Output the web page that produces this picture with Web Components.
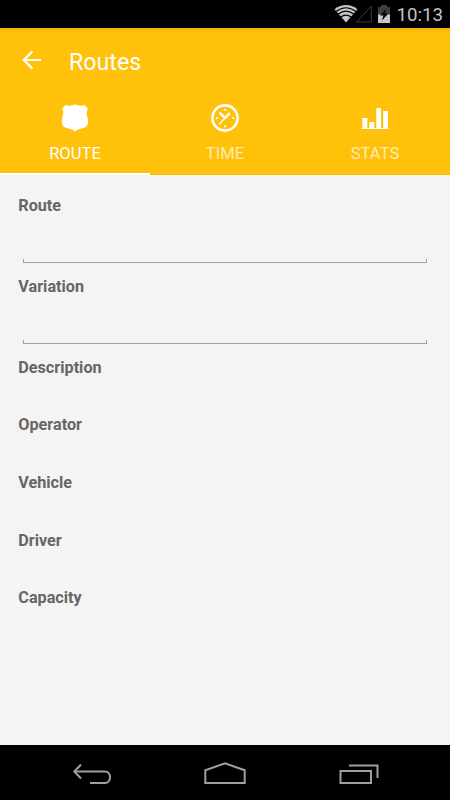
<!DOCTYPE html>
<html lang="en">
<head>
<meta charset="utf-8">
<title>Routes</title>
<style>
  html, body { margin: 0; height: 100%; }
  body { font-family: Roboto, "Noto Sans", sans-serif; background: #f4f4f4; overflow: hidden; }
</style>
</head>
<body>
<route-app>
  <status-bar slot="top">10:13</status-bar>
  <app-bar slot="top">Routes</app-bar>
  <tab-bar slot="top">
    <tab-item icon="route" selected>ROUTE</tab-item>
    <tab-item icon="time">TIME</tab-item>
    <tab-item icon="stats">STATS</tab-item>
  </tab-bar>
  <form-row editable>Route</form-row>
  <form-row editable>Variation</form-row>
  <form-row>Description</form-row>
  <form-row>Operator</form-row>
  <form-row>Vehicle</form-row>
  <form-row>Driver</form-row>
  <form-row>Capacity</form-row>
  <nav-bar slot="bottom"></nav-bar>
</route-app>

<script>
const icons = {
  route: `<path fill="#fff" d="M4.500.9C7.500 2.200 11 1.800 14 .3c3 1.500 6.500 1.900 9.500.6l3.300 3.600c-1.500 3-1.300 5.700-.4 8.500 1.400 4.400 1 8.800-2.600 10.600-3 1.400-7.700 1.200-9.800 4.100-2.100-2.900-6.800-2.700-9.800-4.100C.6 21.800.2 17.400 1.600 13c.9-2.800 1.100-5.500-.4-8.500z"/>`,
  time: `<g fill="none" stroke="#fff"><circle cx="14" cy="14" r="12.600" stroke-width="2.600"/><path stroke-width="2.500" d="M8.300 8.600l5.500 5.100M18.700 9.200l-5 5.200"/><path stroke-width="1.300" d="M14 14l-6 6.500"/></g><path fill="#fff" d="M13.200 4.700h1.700v2h-1.700zM13.200 21.200h1.700v2h-1.700zM4.900 13.200h2v1.700h-2zM21.200 13.200h2v1.700h-2z"/>`,
  stats: `<path fill="#fff" d="M.500 24h27v1h-27zM1.300 14h5v10h-5zM8.300 18h5v6h-5zM15.300 4h4.700v20h-4.700zM22.200 7h4.800v17h-4.800z"/>`
};

class BaseElement extends HTMLElement {
  constructor() {
    super();
    const template = document.createElement("template");
    template.innerHTML = this.render();
    this.attachShadow({ mode: "open" }).appendChild(template.content.cloneNode(true));
  }
}

class RouteApp extends BaseElement {
  render() {
    return `
      <style>
        :host { display: flex; flex-direction: column; height: 100vh; }
        main { flex: 1; padding: 19.400px 18.300px 0; background: #f4f4f4; }
      </style>
      <slot name="top"></slot>
      <main><slot></slot></main>
      <slot name="bottom"></slot>
    `;
  }
}

class StatusBar extends BaseElement {
  render() {
    return `
      <style>
        :host { display: flex; justify-content: flex-end; box-sizing: border-box; height: 28px; padding-right: 7px; background: #000; color: #c4c4c4; font-size: 18.700px; line-height: 31px; }
        svg { display: block; margin-right: 4px; }
      </style>
      <svg width="58" height="28" viewBox="334 0 58 28">
        <path fill="#c6c6c6" d="M334.500 9.200Q346 .8 357.500 9.200L346 22.600z"/>
        <path fill="none" stroke="#000" stroke-width="1.200" d="M336 11.400q10-7.300 20 0M338.300 14q7.700-5.600 15.400 0M340.800 16.900q5.200-3.700 10.400 0"/>
        <path fill="none" stroke="#3d3d3d" d="M371.300 6v16h-14.600z"/>
        <path fill="#3d3d3d" d="M381 5h6v2h3v8h-12V7h3z"/>
        <path fill="#c6c6c6" d="M378 14.500h12V23h-12z"/>
        <path fill="#000" d="M386.500 8.500l-6.500 7h3.400l-1.400 5 6.300-7h-3.500z"/>
      </svg>
      <slot></slot>
    `;
  }
}

class AppBar extends BaseElement {
  render() {
    return `
      <style>
        :host { display: flex; align-items: center; gap: 27px; height: 67px; padding-left: 22px; background: linear-gradient(#e9ae05 0, #f9ba0a 2px, #ffc10a 6px); color: #fff; font-size: 23.200px; }
        svg { display: block; margin-top: -3px; }
      </style>
      <svg width="20" height="20" fill="none" stroke="#fff" stroke-width="2.200"><path d="M19 10H2M10.500 1.300L1.800 10l8.700 8.700"/></svg>
      <slot></slot>
    `;
  }
}

class TabBar extends BaseElement {
  render() {
    return `
      <style>
        :host { display: flex; height: 80px; background: #ffc10a; }
      </style>
      <slot></slot>
    `;
  }
}

class TabItem extends BaseElement {
  render() {
    return `
      <style>
        :host { flex: 1; display: flex; flex-direction: column; align-items: center; box-sizing: border-box; padding-top: 9px; color: rgba(255, 255, 255, .7); font-size: 16.600px; line-height: 20px; border-bottom: 2px solid transparent; }
        :host([selected]) { color: #fff; border-bottom-color: #fff; }
        svg { display: block; margin-bottom: 12px; }
      </style>
      <svg width="28" height="28" viewBox="0 0 28 28">${icons[this.getAttribute("icon")]}</svg>
      <slot></slot>
    `;
  }
}

class FormRow extends BaseElement {
  render() {
    return `
      <style>
        :host { display: block; height: 57.600px; color: #666; font-size: 16.200px; font-weight: 700; line-height: 24px; }
        :host([editable]) { height: 80.700px; }
        .input { display: none; height: 3px; margin: 41px 4.700px 0; border: 1px solid #a4a4a4; border-top: 0; }
        :host([editable]) .input { display: block; }
      </style>
      <slot></slot>
      <div class="input"></div>
    `;
  }
}

class NavBar extends BaseElement {
  render() {
    return `
      <style>
        :host { display: flex; justify-content: space-between; height: 55px; padding: 0 70px; background: #000; }
        svg { display: block; fill: none; stroke: #a0a0a0; stroke-width: 2; }
      </style>
      <svg width="44" height="55" viewBox="70 745 44 55"><path d="M74 771.500h31c6.700 0 6.700 11.500 0 11.500H90"/><path d="M81 764.500l-6.700 7 6.700 7"/></svg>
      <svg width="44" height="55" viewBox="203 745 44 55"><path d="M205.300 783v-12.700l19.700-7 19.700 7V783z"/></svg>
      <svg width="44" height="55" viewBox="336 745 44 55"><path d="M340.500 771h30.500v12h-30.500zM349 765.500h28.500V778"/></svg>
    `;
  }
}

customElements.define("route-app", RouteApp);
customElements.define("status-bar", StatusBar);
customElements.define("app-bar", AppBar);
customElements.define("tab-bar", TabBar);
customElements.define("tab-item", TabItem);
customElements.define("form-row", FormRow);
customElements.define("nav-bar", NavBar);
</script>
</body>
</html>
